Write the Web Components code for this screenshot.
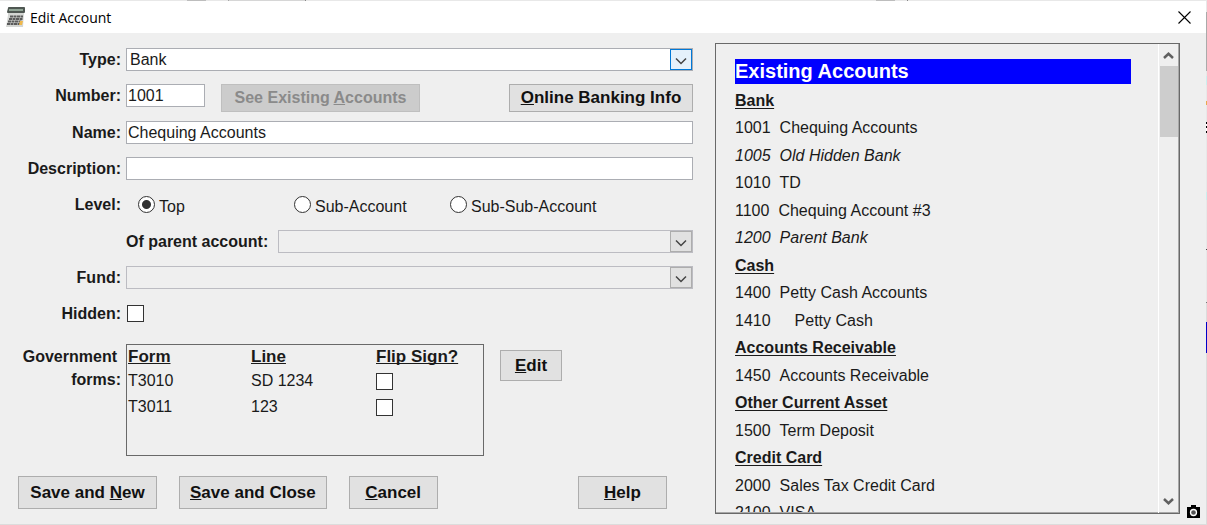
<!DOCTYPE html>
<html lang="en">
<head>
<meta charset="utf-8">
<title>Edit Account</title>
<style>
  html, body { margin: 0; height: 100%; }
  body { background: #f0f0f0; color: #1a1a1a; font: 16px "Liberation Sans", Arial, sans-serif; }
</style>
</head>
<body>
<edit-account-window></edit-account-window>

<script>
const define = (name, html, setup) => {
  const template = document.createElement('template');
  template.innerHTML = html;
  customElements.define(name, class extends HTMLElement {
    constructor() {
      super();
      this.attachShadow({ mode: 'open' }).append(template.content.cloneNode(true));
    }
    connectedCallback() {
      if (setup && !this.ready) { this.ready = true; setup(this, this.shadowRoot); }
    }
  });
};

const rowStyle = `
  :host { display: grid; grid-template-columns: 103px minmax(0, 1fr); column-gap: 5px; align-items: start; }
  .label { font-weight: bold; line-height: 23px; text-align: right; white-space: nowrap; }
  .control { display: flex; align-items: flex-start; min-width: 0; }
`;
const checkStyle = `
  input[type=checkbox] { appearance: none; box-sizing: border-box; width: 17px; height: 17px; margin: 0; border: 1px solid #333; background: #fff; display: block; }
  input[type=checkbox]:checked { background: #333; box-shadow: inset 0 0 0 3px #fff; }
`;

define('win-button', `
  <style>
    :host { display: inline-flex; height: 28px; }
    button { box-sizing: border-box; width: 100%; height: 100%; padding: 0 10px; border: 1px solid #adadad; border-radius: 0; background: #e1e1e1; color: #111; font: bold 17px "Liberation Sans", Arial, sans-serif; white-space: nowrap; }
    button:disabled { background: #ccc; border-color: #bfbfbf; color: #8a8a8a; font-size: 16px; }
  </style>
  <button type="button"><slot></slot></button>
`, (host, root) => { root.querySelector('button').disabled = host.hasAttribute('disabled'); });

define('text-field', `
  <style>${rowStyle}
    input { box-sizing: border-box; flex: 1; min-width: 0; height: 23px; padding: 0 1px; border: 1px solid #abadb3; border-radius: 0; background: #fff; color: #1a1a1a; font: inherit; outline: none; }
    :host([short]) input { flex: 0 0 79px; }
    :host([short]) slot { display: flex; flex: 1; justify-content: space-between; margin-left: 16px; }
  </style>
  <label class="label" for="field"></label>
  <div class="control"><input id="field" type="text"><slot></slot></div>
`, (host, root) => {
  root.querySelector('label').textContent = host.getAttribute('label');
  root.querySelector('input').value = host.getAttribute('value') || '';
});

define('select-field', `
  <style>${rowStyle}
    :host([nested]) { grid-template-columns: auto minmax(0, 1fr); padding-left: 108px; column-gap: 10px; }
    .control { display: grid; }
    select { grid-area: 1 / 1; appearance: none; box-sizing: border-box; width: 100%; height: 23px; padding: 0 24px 0 3px; border: 1px solid #abadb3; border-radius: 0; background: #fff; color: #1a1a1a; font: inherit; opacity: 1; outline: none; }
    select:disabled { background: #efefef; border-color: #bcbcc2; }
    .arrow { grid-area: 1 / 1; justify-self: end; box-sizing: border-box; width: 22px; height: 21px; margin: 1px; border: 1px solid #0078d7; background: #e5f1fb; pointer-events: none; }
    select:disabled + .arrow { border-color: #adadad; background: #e1e1e1; }
    svg { display: block; }
  </style>
  <label class="label" for="field"></label>
  <div class="control">
    <select id="field"></select>
    <span class="arrow"><svg width="20" height="19" fill="none" stroke="#444" stroke-width="1.500"><path d="M5 8.500 L10 13.500 L15 8.500"/></svg></span>
  </div>
`, (host, root) => {
  root.querySelector('label').textContent = host.getAttribute('label');
  const select = root.querySelector('select');
  select.disabled = host.hasAttribute('disabled');
  if (host.hasAttribute('value')) select.add(new Option(host.getAttribute('value')));
});

define('check-field', `
  <style>${rowStyle}${checkStyle} .control { padding: 3px 1px; }</style>
  <label class="label" for="field"></label>
  <div class="control"><input id="field" type="checkbox"></div>
`, (host, root) => { root.querySelector('label').textContent = host.getAttribute('label'); });

define('level-field', `
  <style>${rowStyle}
    .control { display: grid; grid-template-columns: repeat(3, 156px); padding-left: 12px; }
    .control label { display: flex; gap: 4px; line-height: 28px; white-space: nowrap; }
    input { appearance: none; box-sizing: border-box; width: 17px; height: 17px; margin: 3px 0 0; border: 1px solid #333; border-radius: 50%; background: #fff; }
    input:checked { background: radial-gradient(circle, #333 0 4px, #fff 5px); }
  </style>
  <span class="label" id="caption">Level:</span>
  <div class="control" role="radiogroup" aria-labelledby="caption">
    <label><input type="radio" name="level" checked>Top</label>
    <label><input type="radio" name="level">Sub-Account</label>
    <label><input type="radio" name="level">Sub-Sub-Account</label>
  </div>
`);

define('government-forms', `
  <style>${rowStyle}${checkStyle}
    .label { white-space: normal; padding-top: 1px; }
    .first { padding-right: 4px; }
    .control { gap: 16px; }
    .box { box-sizing: border-box; flex: 0 1 358px; height: 112px; border: 1px solid #696969; }
    table { border-collapse: collapse; table-layout: fixed; width: 100%; }
    th, td { padding: 0 0 0 1px; text-align: left; white-space: nowrap; }
    th { height: 23px; font-size: 17px; text-decoration: underline; text-decoration-skip-ink: none; }
    td { height: 26px; line-height: 24px; }
    .form { width: 122px; } .line { width: 124px; }
    win-button { width: 62px; height: 31px; margin-top: 6px; }
  </style>
  <div class="label" id="caption"><div class="first">Government</div><div>forms:</div></div>
  <div class="control">
    <div class="box">
      <table aria-labelledby="caption">
        <thead><tr><th class="form">Form</th><th class="line">Line</th><th>Flip Sign?</th></tr></thead>
        <tbody>
          <tr><td>T3010</td><td>SD 1234</td><td><input type="checkbox" aria-label="Flip sign of T3010"></td></tr>
          <tr><td>T3011</td><td>123</td><td><input type="checkbox" aria-label="Flip sign of T3011"></td></tr>
        </tbody>
      </table>
    </div>
    <win-button><u>E</u>dit</win-button>
  </div>
`);

define('title-bar', `
  <style>
    :host { display: flex; align-items: center; box-sizing: border-box; height: 33px; padding: 0 16px 0 6px; background: #fff; color: #000;
      border-top: 1px solid; border-image: linear-gradient(90deg, #e8e8e8 188px, #bdbdbd 188px 207px, #e8e8e8 207px 229px, #a8a8a8 229px 230px, #d6d6d6 230px 305px, #888 305px 306px, #e8e8e8 306px 876px, #bdbdbd 876px 895px, #e8e8e8 895px 906px, #888 906px 907px, #e8e8e8 907px) 1; }
    h1 { flex: 1; margin: 0 0 0 4px; font: 14px "Open Sans", "Noto Sans", sans-serif; }
    button { display: flex; padding: 0; border: 0; background: none; }
    svg { display: block; }
  </style>
  <svg width="20" height="21" viewBox="0 0 20 21" aria-hidden="true">
    <path d="M2 1 Q2 0 3 0 H18 Q19 0 19 1 L18 6 L17 20 H0 L2 8Z" fill="#d4d6d3"/>
    <path d="M2 1 Q2 0 3 0 H18 Q19 0 19 1 V5 Q19 6 18 6 H2 Q1 6 1 5Z" fill="#4f5752"/>
    <path d="M3 2 H17 V4 H3Z" fill="#91a596"/>
    <path d="M4 9.500 H17 M3 12 H16.500 M2 14.500 H16 M1 17 H15" stroke="#5b5b5b" stroke-width="2.100" stroke-dasharray="3 .5"/>
    <path d="M14 14 H17 L16 18 H13Z" fill="#efb84c"/>
  </svg>
  <h1><slot></slot></h1>
  <button type="button" aria-label="Close"><svg width="13" height="13" stroke="#000" stroke-width="1.100"><path d="M.5 .5 L12.500 12.500 M12.500 .5 L.5 12.500"/></svg></button>
`);

define('account-heading', `
  <style>:host { display: flex; align-items: center; font-weight: bold; text-decoration: underline; text-decoration-thickness: 1px; text-underline-offset: 2px; white-space: nowrap; }</style>
  <span><slot></slot></span>
`);

define('account-item', `
  <style>
    :host { display: flex; align-items: center; gap: 9px; white-space: nowrap; }
    :host([inactive]) { font-style: italic; }
    :host([sub]) slot { display: block; padding-left: 15px; }
  </style>
  <span class="number"></span><slot></slot>
`, (host, root) => { root.querySelector('.number').textContent = host.getAttribute('number'); });

define('account-panel', `
  <style>
    :host { display: flex; contain: size; box-sizing: border-box; border: 1px solid #696969; box-shadow: inset -1px -1px #a8a8a8; }
    .content { flex: 1; min-width: 0; overflow-y: auto; scrollbar-width: none; padding: 15px 27px 0 19px; margin-bottom: 1px; }
    h2 { margin: 0 0 3px; background: #00f; color: #fff; font-size: 20px; line-height: 25px; white-space: nowrap; }
    .rows { display: grid; grid-auto-rows: 27px 28px; }
    .bar { display: flex; flex-direction: column; align-items: center; width: 19px; margin-right: 1px; border-left: 1px solid #fff; }
    .up { margin: 8px 0 7px; }
    .thumb { width: 18px; height: 71px; background: #cdcdcd; }
    .down { margin: auto 0 8px; }
    svg { display: block; flex: none; }
  </style>
  <div class="content">
    <h2><slot name="title"></slot></h2>
    <div class="rows"><slot></slot></div>
  </div>
  <div class="bar" aria-hidden="true">
    <svg class="up" width="11" height="7" fill="none" stroke="#606060" stroke-width="2.500"><path d="M1 6 L5.500 1.800 L10 6"/></svg>
    <div class="thumb"></div>
    <svg class="down" width="11" height="7" fill="none" stroke="#606060" stroke-width="2.500"><path d="M1 1 L5.500 5.200 L10 1"/></svg>
  </div>
`);

define('edit-account-window', `
  <style>
    :host { display: flex; flex-direction: column; position: relative; min-height: 100%; box-sizing: border-box; border-bottom: 1px solid #dcdcdc; background: #efefef; }
    main { display: grid; grid-template-columns: 690fr 465fr 13px; column-gap: 7px; padding: 10px 7px 10px 18px; }
    form { padding: 5px 15px 5px 0; }
    .fields { display: grid; grid-auto-rows: 36px 37px 36px; margin-bottom: 5px; }
    .online { width: 184px; }
    footer { display: flex; align-items: flex-start; gap: 22px; padding: 20px 26px 0 0; }
    footer win-button { height: 33px; }
    .new { width: 139px; }
    .small { width: 89px; }
    .help { margin-left: auto; }
    .camera { align-self: end; margin-bottom: -4px; }
    /* sliver of the desktop that shows past the window's right edge */
    .edge { position: absolute; top: 0; right: 0; bottom: 0; width: 1px;
      background: linear-gradient(#e8e8e8 12px, #aaa 12px 71px, #e8e8e8 71px 76px, #cdeeee 76px 85px, #e8e8e8 85px 101px, #e9a94e 101px 105px, #e8e8e8 105px 122px, #000 122px 124px, #fff 124px 126px, #000 126px 128px, #fff 128px 131px, #000 131px 133px, #e8e8e8 133px 192px, #cdeeee 192px 200px, #e8e8e8 200px 249px, #444 249px 250px, #e8e8e8 250px 302px, #777 302px 303px, #dcdcdc 303px 322px, #0000c8 322px 353px, #dcdcdc 353px); }
  </style>
  <title-bar>Edit Account</title-bar>
  <main>
    <form>
      <div class="fields">
        <select-field label="Type:" value="Bank"></select-field>
        <text-field label="Number:" value="1001" short>
          <win-button class="see" disabled>See Existing <u>A</u>ccounts</win-button>
          <win-button class="online"><u>O</u>nline Banking Info</win-button>
        </text-field>
        <text-field label="Name:" value="Chequing Accounts"></text-field>
        <text-field label="Description:"></text-field>
        <level-field></level-field>
        <select-field label="Of parent account:" nested disabled></select-field>
        <select-field label="Fund:" disabled></select-field>
        <check-field label="Hidden:"></check-field>
      </div>
      <government-forms></government-forms>
      <footer>
        <win-button class="new">Save and <u>N</u>ew</win-button>
        <win-button><u>S</u>ave and Close</win-button>
        <win-button class="small"><u>C</u>ancel</win-button>
        <win-button class="small help"><u>H</u>elp</win-button>
      </footer>
    </form>
    <account-panel>
      <span slot="title">Existing Accounts</span>
      <account-heading>Bank</account-heading>
      <account-item number="1001">Chequing Accounts</account-item>
      <account-item number="1005" inactive>Old Hidden Bank</account-item>
      <account-item number="1010">TD</account-item>
      <account-item number="1100">Chequing Account #3</account-item>
      <account-item number="1200" inactive>Parent Bank</account-item>
      <account-heading>Cash</account-heading>
      <account-item number="1400">Petty Cash Accounts</account-item>
      <account-item number="1410" sub>Petty Cash</account-item>
      <account-heading>Accounts Receivable</account-heading>
      <account-item number="1450">Accounts Receivable</account-item>
      <account-heading>Other Current Asset</account-heading>
      <account-item number="1500">Term Deposit</account-item>
      <account-heading>Credit Card</account-heading>
      <account-item number="2000">Sales Tax Credit Card</account-item>
      <account-item number="2100">VISA</account-item>
    </account-panel>
    <svg class="camera" width="13" height="13" viewBox="0 0 13 13" aria-hidden="true">
      <path d="M0 2 H4 V0 H9 V2 H13 V13 H0Z" fill="#000"/>
      <circle cx="6.500" cy="7.500" r="3" fill="#555" stroke="#fff" stroke-width="1.300"/>
    </svg>
  </main>
  <div class="edge" aria-hidden="true"></div>
  <style>.see { width: 199px; }</style>
`);
</script>
</body>
</html>
